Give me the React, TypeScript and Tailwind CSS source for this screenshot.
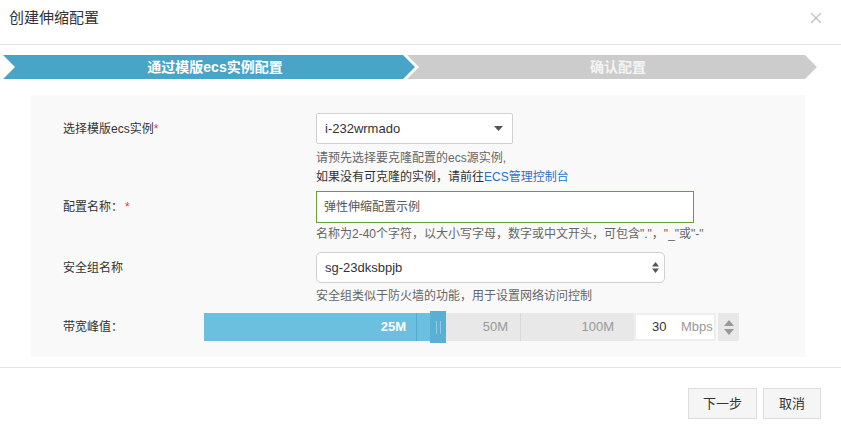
import React from "react";
import { X } from "lucide-react";

const Star = () => <span className="text-[#e4393c] ml-[2px]">*</span>;

const Label: React.FC<{ children: React.ReactNode }> = ({ children }) => (
  <div className="w-[253px] shrink-0 text-[12px] text-[#333]">{children}</div>
);

const Help: React.FC<{ className?: string; children: React.ReactNode }> = ({ className, children }) => (
  <div className={"pl-[253px] text-[12px] text-[#666] " + (className || "")}>{children}</div>
);

const App: React.FC = () => {
  return (
    <div className="w-[841px] h-[434px] bg-white font-['Liberation_Sans','Noto_Sans_CJK_SC',sans-serif] text-[#333]">
      {/* header */}
      <div className="h-[45px] flex items-start justify-between pt-[8px] pl-[9px] pr-[16px] border-b border-[#e5e5e5]">
        <div className="text-[15px] leading-[20px] text-[#333]">创建伸缩配置</div>
        <X className="w-[18px] h-[18px] text-[#c2c2c2] mt-[1px]" strokeWidth={1.8} />
      </div>

      {/* steps */}
      <div className="flex mt-[10px] pl-[3px] h-[24px]">
        <div className="w-[412px] h-[24px] bg-[#48a5c8] pl-[12px] flex items-center justify-center text-white font-bold text-[14px] [clip-path:polygon(0_0,calc(100%_-_12px)_0,100%_50%,calc(100%_-_12px)_100%,0_100%,12px_50%)]">
          通过模版ecs实例配置
        </div>
        <div className="w-[410px] h-[24px] -ml-[8px] bg-[#cccccc] pl-[12px] flex items-center justify-center text-[#f4f4f4] font-bold text-[14px] [clip-path:polygon(0_0,calc(100%_-_12px)_0,100%_50%,calc(100%_-_12px)_100%,0_100%,12px_50%)]">
          确认配置
        </div>
      </div>

      {/* form panel */}
      <div className="mt-[16px] ml-[31px] w-[774px] h-[262px] bg-[#f9f9f9] pt-[18px] pl-[32px] flex flex-col">
        <div className="flex items-center">
          <Label>
            选择模版ecs实例<span className="text-[#e4393c]">*</span>
          </Label>
          <div className="w-[197px] h-[31px] bg-white border border-[#d0d0d0] rounded-[2px] flex items-center justify-between pl-[8px] pr-[9px] text-[13px] text-[#333]">
            <span>i-232wrmado</span>
            <svg width="9" height="5" viewBox="0 0 9 5">
              <path d="M0 0h9L4.5 5z" fill="#555" />
            </svg>
          </div>
        </div>
        <Help className="mt-[5px] h-[18px] leading-[18px]">请预先选择要克隆配置的ecs源实例,</Help>
        <Help className="h-[21px] leading-[21px] !text-[#333]">
          如果没有可克隆的实例，请前往<span className="text-[#2a72c7]">ECS管理控制台</span>
        </Help>

        <div className="flex items-center mt-[3px]">
          <Label>
            配置名称：<Star />
          </Label>
          <div className="w-[378px] h-[32px] bg-white border border-[#63a13a] flex items-center pl-[7px] text-[12px] text-[#555]">
            弹性伸缩配置示例
          </div>
        </div>
        <Help className="mt-[2px] h-[18px] leading-[18px]">
          名称为2-40个字符，以大小写字母，数字或中文开头，可包含"."，"_"或"-"
        </Help>

        <div className="flex items-center mt-[9px]">
          <Label>安全组名称</Label>
          <div className="w-[349px] h-[31px] bg-white border border-[#d0d0d0] rounded-[5px] flex items-center justify-between pl-[8px] pr-[5px] text-[13px] text-[#333]">
            <span>sg-23dksbpjb</span>
            <svg width="7" height="11" viewBox="0 0 7 11">
              <path d="M0 4.5h7L3.5 0z M0 6.5h7L3.5 11z" fill="#555" />
            </svg>
          </div>
        </div>
        <Help className="mt-[4px] h-[18px] leading-[18px]">安全组类似于防火墙的功能，用于设置网络访问控制</Help>

        <div className="flex items-center mt-[8px]">
          <div className="w-[141px] shrink-0 text-[12px] text-[#333]">带宽峰值：</div>
          <div className="flex items-center h-[28px]">
            <div className="w-[213px] h-[28px] bg-[#6bc0e0] border-r border-[#55a9cf] flex items-center justify-end pr-[10px] text-white font-bold text-[13px]">
              25M
            </div>
            <div className="w-[13px] h-[28px] bg-[#6bc0e0]" />
            <div className="w-[16px] h-[32px] bg-[#5aafd4] flex items-center justify-center gap-[3px]">
              <div className="w-px h-[13px] bg-[#8fcbe6]" />
              <div className="w-px h-[13px] bg-[#8fcbe6]" />
            </div>
            <div className="w-[75px] h-[28px] bg-[#e8e8e8] border-r border-[#d8d8d8] flex items-center justify-end pr-[12px] text-[13px] text-[#999]">
              50M
            </div>
            <div className="w-[113px] h-[28px] bg-[#e8e8e8] flex items-center justify-end pr-[20px] text-[13px] text-[#999]">
              100M
            </div>
            <div className="w-[82px] h-[28px] bg-white border-2 border-[#eeeeee] flex items-center pl-[16px] text-[13px]">
              <span className="text-[#333] w-[29px]">30</span>
              <span className="text-[#999]">Mbps</span>
            </div>
            <div className="w-[21px] h-[28px] ml-[2px] bg-[#e8e8e8] flex flex-col items-center justify-center gap-[3px]">
              <svg width="10" height="6" viewBox="0 0 10 6">
                <path d="M0 6h10L5 0z" fill="#999" />
              </svg>
              <svg width="10" height="6" viewBox="0 0 10 6">
                <path d="M0 0h10L5 6z" fill="#999" />
              </svg>
            </div>
          </div>
        </div>
      </div>

      {/* footer */}
      <div className="mt-[10px] border-t border-[#e5e5e5] flex justify-end gap-[6px] pt-[20px] pr-[20px]">
        <button className="w-[69px] h-[31px] bg-[#f5f5f5] border border-[#dddddd] text-[13px] text-[#333]">下一步</button>
        <button className="w-[58px] h-[31px] bg-[#f5f5f5] border border-[#dddddd] text-[13px] text-[#333]">取消</button>
      </div>
    </div>
  );
};

export default App;
